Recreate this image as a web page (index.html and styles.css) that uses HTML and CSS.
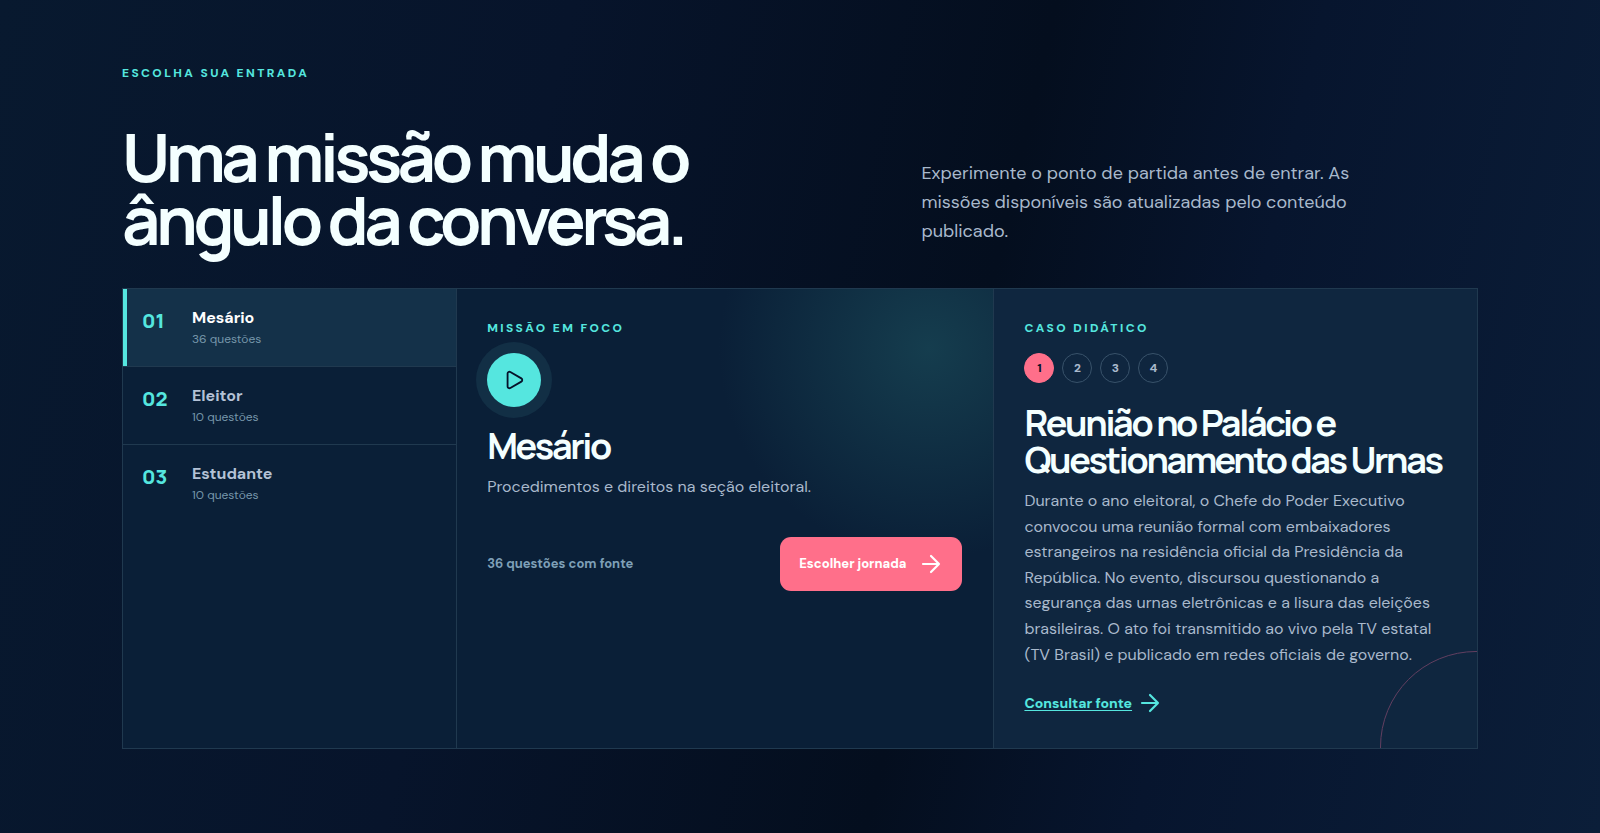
FILE: index.html
```
<!DOCTYPE html>
<html lang="pt-BR">
<head>
    <meta charset="UTF-8">
    <meta name="viewport" content="width=device-width, initial-scale=1">
    <title>Escolha sua entrada</title>
    <link rel="stylesheet" href="styles.css">
</head>
<body>
<section class="missions">
    <div class="container">
        <p class="eyebrow">Escolha sua entrada</p>
        <header class="intro">
            <h2>Uma missão muda o ângulo da conversa.</h2>
            <p>Experimente o ponto de partida antes de entrar. As missões disponíveis são atualizadas pelo conteúdo publicado.</p>
        </header>

        <div class="board">
            <div class="tabs">
                <button type="button" class="tab active">
                    <span class="num">01</span>
                    <span class="label"><strong>Mesário</strong><small>36 questões</small></span>
                </button>
                <button type="button" class="tab">
                    <span class="num">02</span>
                    <span class="label"><strong>Eleitor</strong><small>10 questões</small></span>
                </button>
                <button type="button" class="tab">
                    <span class="num">03</span>
                    <span class="label"><strong>Estudante</strong><small>10 questões</small></span>
                </button>
            </div>

            <article class="focus">
                <p class="eyebrow">Missão em foco</p>
                <div class="play">
                    <svg width="22" height="22" viewBox="0 0 24 24" fill="none" stroke="currentColor" stroke-width="2" stroke-linecap="round" stroke-linejoin="round">
                        <path d="M5 5a2 2 0 0 1 3.008-1.728l11.997 6.998a2 2 0 0 1 .003 3.458l-12 7A2 2 0 0 1 5 19z"/>
                    </svg>
                </div>
                <h3>Mesário</h3>
                <p class="text">Procedimentos e direitos na seção eleitoral.</p>
                <div class="actions">
                    <span class="count">36 questões com fonte</span>
                    <button type="button" class="btn">
                        Escolher jornada
                        <svg class="arrow" viewBox="0 0 24 24"><path d="M4 12h16M12 4l8 8-8 8"/></svg>
                    </button>
                </div>
            </article>

            <article class="case">
                <p class="eyebrow">Caso didático</p>
                <div class="steps">
                    <button type="button" class="step active">1</button>
                    <button type="button" class="step">2</button>
                    <button type="button" class="step">3</button>
                    <button type="button" class="step">4</button>
                </div>
                <h3>Reunião no Palácio e Questionamento das Urnas</h3>
                <p class="text">Durante o ano eleitoral, o Chefe do Poder Executivo convocou uma reunião formal com embaixadores estrangeiros na residência oficial da Presidência da República. No evento, discursou questionando a segurança das urnas eletrônicas e a lisura das eleições brasileiras. O ato foi transmitido ao vivo pela TV estatal (TV Brasil) e publicado em redes oficiais de governo.</p>
                <a class="source" href="#">
                    <span>Consultar fonte</span>
                    <svg class="arrow" viewBox="0 0 24 24"><path d="M4 12h16M12 4l8 8-8 8"/></svg>
                </a>
            </article>
        </div>
    </div>
</section>
</body>
</html>
```

FILE: styles.css
```
*{
    box-sizing: border-box;
}
body{
    margin: 0;
    background: #020817;
    color: #f4ffff;
    font-family: "DM Sans", Inter, "Liberation Sans", sans-serif;
    font-size: 16px;
}
h2, h3, p{
    margin: 0;
}
button{
    font-family: inherit;
    cursor: pointer;
}
.missions{
    padding: 64px 0 84px;
    background: linear-gradient(103deg, #08192f 0%, #07142b 32%, #040e1e 59%, #07152e 74%, #0b1e39 100%);
}
.container{
    width: calc(100% - 244px);
    max-width: 1480px;
    margin: 0 auto;
}
.eyebrow{
    color: #55e6df;
    font-size: 12px;
    line-height: 18px;
    font-weight: 800;
    letter-spacing: .2em;
    text-transform: uppercase;
}

/* intro */
.intro{
    display: grid;
    grid-template-columns: 27fr 20fr;
    gap: 48px;
    align-items: end;
    margin-top: 43px;
    margin-bottom: 37px;
}
.intro h2{
    max-width: 620px;
    font-family: Manrope, Inter, sans-serif;
    font-size: 67px;
    line-height: 63px;
    font-weight: 700;
    letter-spacing: -.068em;
}
.intro p{
    max-width: 450px;
    margin-bottom: 5px;
    color: #a9b9cc;
    font-size: 18px;
    line-height: 29px;
}

/* board */
.board{
    display: grid;
    grid-template-columns: 62fr 100fr 90fr;
    border: 1px solid #20394f;
    background: #0a1f37;
}
.tabs{
    display: flex;
    flex-direction: column;
}
.tab{
    display: flex;
    gap: 20px;
    height: 78px;
    padding: 18px 16px 0 19px;
    border: 0;
    border-bottom: 1px solid #20394f;
    background: none;
    color: #b4c2d6;
    text-align: left;
}
.tab:last-child{
    border-bottom: 0;
}
.tab.active{
    background: #143149;
    box-shadow: inset 4px 0 #55e6df;
    color: #fff;
}
.num{
    width: 30px;
    color: #55e6df;
    font-family: Manrope, Inter, sans-serif;
    font-size: 20px;
    line-height: 28px;
    font-weight: 800;
}
.label strong{
    display: block;
    font-size: 16px;
    line-height: 22px;
    font-weight: 700;
}
.label small{
    display: block;
    color: #7797ab;
    font-size: 12px;
    line-height: 20px;
}
.focus, .case{
    padding: 30px 31px 33px 30px;
    border-left: 1px solid #20394f;
}
.focus{
    background: radial-gradient(circle at 88% 13%, #153d4e 0, rgba(21, 61, 78, 0) 210px);
}
.focus h3, .case h3{
    font-family: Manrope, Inter, sans-serif;
    font-size: 36px;
    line-height: 37px;
    font-weight: 700;
    letter-spacing: -.066em;
}
.text{
    margin-top: 10px;
    color: #a9b9cc;
    font-size: 16px;
    line-height: 1.6;
}
.play{
    display: grid;
    place-items: center;
    width: 54px;
    height: 54px;
    margin-top: 16px;
    margin-bottom: 20px;
    border-radius: 50%;
    background: #55e6df;
    box-shadow: 0 0 0 11px #122f45;
    color: #06122a;
}
.actions{
    display: flex;
    align-items: center;
    justify-content: space-between;
    margin-top: 37px;
}
.count{
    color: #7fa0b8;
    font-size: 13px;
    font-weight: 700;
}
.btn{
    display: flex;
    align-items: center;
    gap: 13px;
    height: 54px;
    padding: 0 19px;
    border: 0;
    border-radius: 11px;
    background: #ff6f8a;
    color: #fff;
    font-size: 13px;
    font-weight: 800;
}
.arrow{
    width: 24px;
    height: 24px;
    fill: none;
    stroke: currentColor;
    stroke-width: 2.2;
    stroke-linecap: round;
    stroke-linejoin: round;
}

/* case */
.case{
    position: relative;
    overflow: hidden;
    background: #0f263f;
}
.case:after{
    content: "";
    position: absolute;
    right: -95px;
    bottom: -95px;
    width: 190px;
    height: 190px;
    border: 1px solid #623f60;
    border-radius: 50%;
}
.steps{
    display: flex;
    gap: 8px;
    margin-top: 16px;
    margin-bottom: 21px;
}
.step{
    width: 30px;
    height: 30px;
    padding: 0;
    border: 1px solid #38526a;
    border-radius: 50%;
    background: none;
    color: #a9b9cc;
    font-size: 12px;
    font-weight: 800;
}
.step.active{
    border-color: #ff6f8a;
    background: #ff6f8a;
    color: #06122a;
}
.source{
    display: inline-flex;
    align-items: center;
    gap: 6px;
    margin-top: 24px;
    color: #55e6df;
    font-size: 14px;
    font-weight: 800;
    text-decoration: none;
}
.source span{
    text-decoration: underline;
    text-underline-offset: 2px;
}
```
